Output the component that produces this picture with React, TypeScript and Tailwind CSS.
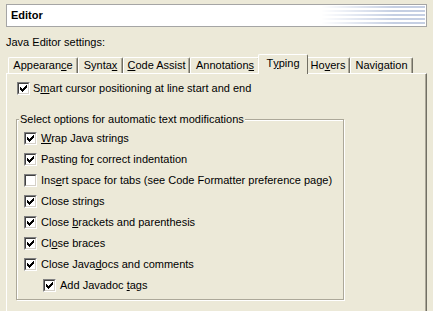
import type { ReactNode } from "react";

const font = { fontFamily: '"Liberation Sans", Arial, sans-serif' };

function Check({ checked }: { checked: boolean }) {
  return (
    <div className="flex h-[13px] w-[13px] shrink-0 border border-t-[#808080] border-l-[#808080] border-b-white border-r-white">
      <div className="flex flex-1 items-center justify-center border border-t-[#404040] border-l-[#404040] border-b-[#d4d0c8] border-r-[#d4d0c8] bg-white">
        {checked && (
          <svg width="7" height="7" viewBox="0 0 7 7" shapeRendering="crispEdges">
            <path
              fill="#000"
              d="M6 0h1v3h-1zM5 1h1v3h-1zM4 2h1v3h-1zM3 3h1v3h-1zM2 4h1v3h-1zM1 3h1v3h-1zM0 2h1v3h-1z"
            />
          </svg>
        )}
      </div>
    </div>
  );
}

function Row({ checked = true, indent = false, children }: { checked?: boolean; indent?: boolean; children: ReactNode }) {
  return (
    <div className={`flex h-[21px] items-center gap-[4px] ${indent ? "pl-[19px]" : ""}`}>
      <Check checked={checked} />
      <span className="leading-[13px]">{children}</span>
    </div>
  );
}

const U = ({ children }: { children: ReactNode }) => (
  <span className="underline underline-offset-[1px]">{children}</span>
);

const tabs: { w: string; label: ReactNode; active?: boolean }[] = [
  { w: "w-[70px]", label: <>Appearan<U>c</U>e</> },
  { w: "w-[45px]", label: <>Synta<U>x</U></> },
  { w: "w-[67px]", label: <><U>C</U>ode Assist</> },
  { w: "w-[70px]", label: <>Annotation<U>s</U></> },
  { w: "w-[50px]", label: <>T<U>y</U>ping</>, active: true },
  { w: "w-[44px]", label: <>Ho<U>v</U>ers</> },
  { w: "w-[63px]", label: <>Navi<U>g</U>ation</> },
];

export default function App() {
  return (
    <div className="h-[311px] w-[433px] overflow-hidden bg-[#ece9d8] px-[6px] pt-[4px] text-[11px] text-black" style={font}>
      <div className="flex h-[23px] w-[421px] items-center border border-[#a5a5a5] bg-white pl-[4px]">
        <span className="flex-1 font-bold">Editor</span>
        <svg width="104" height="19" className="mr-px">
          <defs>
            <linearGradient id="fade" x1="0" x2="1">
              <stop offset="0" stopColor="#fff" stopOpacity="0" />
              <stop offset="0.7" stopColor="#fff" stopOpacity="1" />
            </linearGradient>
            <mask id="m">
              <rect width="104" height="19" fill="url(#fade)" />
            </mask>
            <pattern id="dots" width="2" height="4" patternUnits="userSpaceOnUse">
              <rect width="2" height="2" fill="#c5cfe3" />
            </pattern>
          </defs>
          <rect width="104" height="19" fill="url(#dots)" mask="url(#m)" />
        </svg>
      </div>

      <div className="mt-[9px] h-[13px] leading-[13px]">Java Editor settings:</div>

      <div className="mt-[5px] flex h-[19px] items-end pl-[2px]">
        {tabs.map((t, i) =>
          t.active ? (
            <div
              key={i}
              className={`relative z-10 -mx-[2px] -mb-px flex h-[20px] ${t.w} shrink-0 justify-center rounded-t-[2px] border-t border-l border-r border-t-white border-l-white border-r-[#716f64] bg-[#ece9d8] pt-[2px] leading-[13px]`}
            >
              {t.label}
            </div>
          ) : (
            <div
              key={i}
              className={`flex h-[16px] ${t.w} shrink-0 justify-center rounded-t-[2px] border-t border-l border-r border-t-white border-l-white border-r-[#716f64] pt-[1px] leading-[13px] shadow-[inset_-1px_0_0_#aca899]`}
            >
              {t.label}
            </div>
          )
        )}
      </div>

      <div className="h-[300px] w-[421px] border-t border-l border-r border-t-white border-l-white border-r-[#716f64] pl-[10px] pt-[8px] shadow-[inset_-1px_0_0_#aca899]">
        <div className="flex h-[13px] items-center gap-[3px]">
          <Check checked />
          <span className="leading-[13px]">
            S<U>m</U>art cursor positioning at line start and end
          </span>
        </div>

        <div className="-ml-px mt-[24px] w-[328px] border border-[#aca899] pb-[3px] pl-[7px] shadow-[inset_1px_1px_0_#fff,1px_1px_0_#fff]">
          <div className="-ml-[5px] -mt-[7px] h-[13px] w-fit bg-[#ece9d8] px-[1px] leading-[13px]">
            Select options for automatic text modifications
          </div>
          <div className="mt-[2px]">
            <Row><U>W</U>rap Java strings</Row>
            <Row>Pasting fo<U>r</U> correct indentation</Row>
            <Row checked={false}>Ins<U>e</U>rt space for tabs (see Code Formatter preference page)</Row>
            <Row>Close strings</Row>
            <Row>Close <U>b</U>rackets and parenthesis</Row>
            <Row>Cl<U>o</U>se braces</Row>
            <Row>Close Java<U>d</U>ocs and comments</Row>
            <Row indent>Add Javadoc <U>t</U>ags</Row>
          </div>
        </div>
      </div>
    </div>
  );
}
